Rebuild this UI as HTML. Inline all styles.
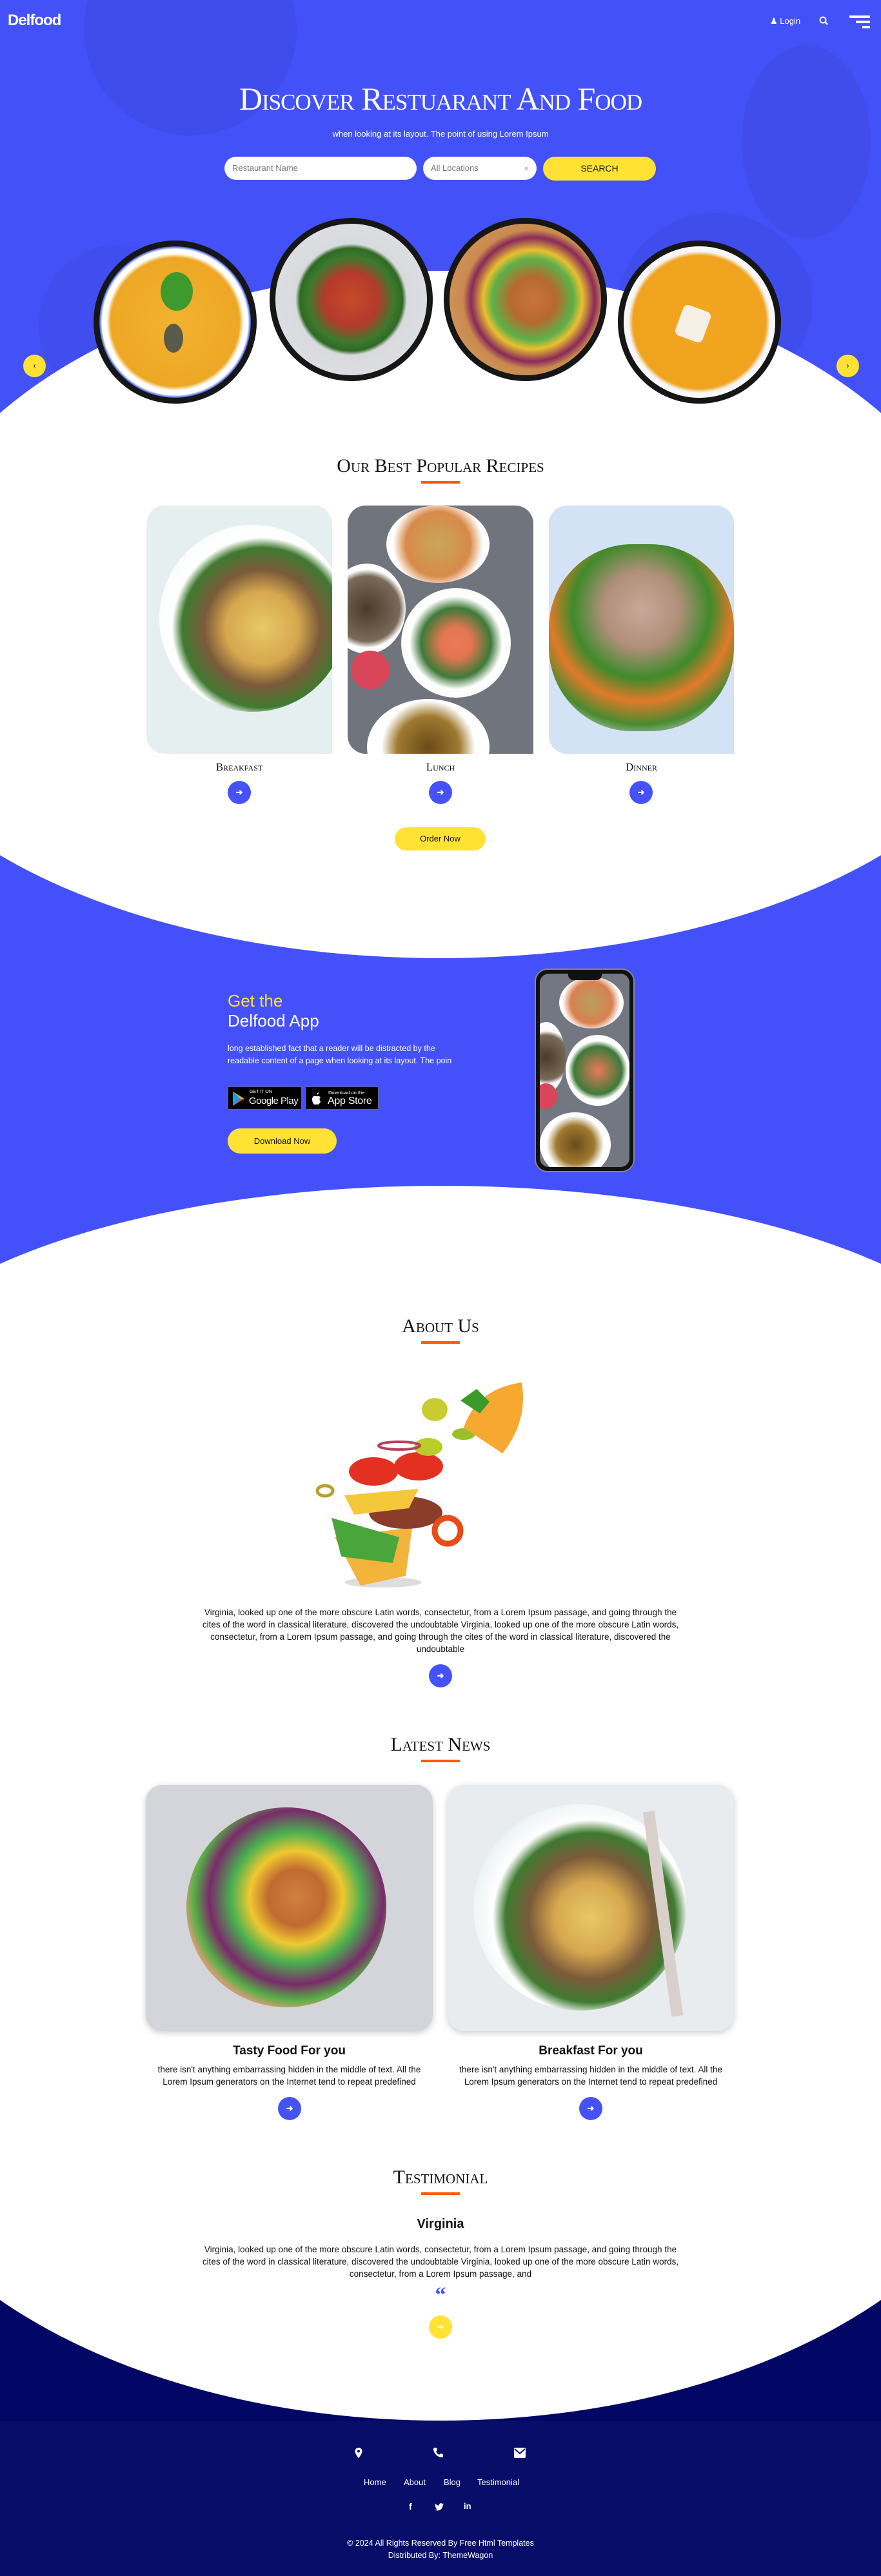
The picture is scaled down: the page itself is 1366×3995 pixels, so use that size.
<!DOCTYPE html>
<html><head><meta charset="utf-8">
<style>
*{margin:0;padding:0;box-sizing:border-box}
body{width:1366px;height:3995px;position:relative;overflow:hidden;background:#fff;font-family:"Liberation Sans",sans-serif;color:#111}
.a{position:absolute}
.h{font-family:"Liberation Serif",serif;font-variant:small-caps;color:#111;text-align:center;left:0;width:1366px}
.ul{position:absolute;left:653px;width:60px;height:4px;background:#ff5a00}
.c{text-align:center;left:0;width:1366px}
.btn{position:absolute;width:36px;height:36px;border-radius:50%;background:#4552f7;color:#fff;font-size:13px;line-height:36px;text-align:center;font-weight:bold}
.ybtn{position:absolute;background:#ffe234;border-radius:20px;text-align:center;color:#111;font-size:13px}
.circ{position:absolute;width:253px;height:253px;border-radius:50%;border:9px solid #161616;overflow:hidden}
.badge{position:absolute;background:#000;border:1px solid #666;height:36px;color:#fff}
p{font-size:13.5px;line-height:19px}
</style></head><body>

<svg class="a" style="left:0;top:1300px" width="1366" height="700">
 <rect x="0" y="0" width="1366" height="680" fill="#4451fa"/>
 <ellipse cx="683" cy="-272" rx="900" ry="458" fill="#fff"/>
 <ellipse cx="683" cy="886" rx="900" ry="347" fill="#fff"/>
</svg>
<svg class="a" style="left:0;top:3300px" width="1366" height="460">
 <rect x="0" y="262" width="1366" height="194" fill="#020766"/>
 <ellipse cx="683" cy="-90" rx="905" ry="544" fill="#fff"/>
</svg>

<div class="a" style="left:0;top:0;width:1366px;height:660px;background:#4351f8;overflow:hidden">
  <div class="a" style="left:130px;top:-120px;width:330px;height:330px;border-radius:50%;background:#3e4cec"></div>
  <div class="a" style="left:1150px;top:70px;width:200px;height:300px;border-radius:50%;background:#404deb"></div>
  <div class="a" style="left:960px;top:330px;width:300px;height:280px;border-radius:50%;background:#404ded"></div>
  <div class="a" style="left:60px;top:380px;width:240px;height:250px;border-radius:50%;background:#404eef"></div>
</div>
<svg class="a" style="left:0;top:0" width="1366" height="700"><ellipse cx="683" cy="965" rx="850" ry="545" fill="#fff"/></svg>

<div class="a" style="left:12px;top:18px;font-size:24px;font-weight:bold;color:#fff;letter-spacing:-1px">Delfood</div>
<div class="a" style="left:1194px;top:25px;font-size:13px;color:#fff">&#9823; Login</div>
<svg class="a" style="left:1270px;top:25px" width="14" height="14"><circle cx="6" cy="6" r="4.5" fill="none" stroke="#fff" stroke-width="2"/><path d="M9 9l4 4" stroke="#fff" stroke-width="2.5"/></svg>
<div class="a" style="left:1317px;top:24px;width:32px;height:4px;background:#fff"></div>
<div class="a" style="left:1327px;top:32px;width:22px;height:4px;background:#fff"></div>
<div class="a" style="left:1337px;top:40px;width:12px;height:4px;background:#fff"></div>

<div class="a h" style="top:124px;font-size:50px;color:#fff;letter-spacing:-1px">Discover Restuarant And Food</div>
<div class="a c" style="top:200px;font-size:13px;color:#fff">when looking at its layout. The point of using Lorem Ipsum</div>
<div class="a" style="left:348px;top:243px;width:298px;height:36px;background:#fff;border-radius:18px;font-size:13px;color:#777;padding:10px 12px">Restaurant Name</div>
<div class="a" style="left:656px;top:243px;width:176px;height:36px;background:#fff;border-radius:18px;font-size:13px;color:#777;padding:10px 12px">All Locations<span style="float:right;color:#ccc">&#9679;</span></div>
<div class="ybtn" style="left:842px;top:243px;width:175px;height:37px;line-height:37px;font-size:14px">SEARCH</div>

<div class="circ" style="left:145px;top:373px;background:radial-gradient(circle,#f1b230 0,#eea825 60%,#fff 64%,#fff 68%,#1d3ec8 71%,#1d3ec8 80%,#fff 82%)">
 <div class="a" style="left:95px;top:40px;width:50px;height:60px;border-radius:50%;background:#3f9a2e"></div>
 <div class="a" style="left:100px;top:120px;width:30px;height:45px;border-radius:50%;background:#5a5a4a"></div>
</div>
<div class="circ" style="left:418px;top:338px;background:radial-gradient(circle,#c84a2a 0,#b43a2c 25%,#3c7a2e 40%,#2f6a25 48%,#d9dadd 52%,#e2e3e6 100%)"></div>
<div class="circ" style="left:688px;top:338px;background:radial-gradient(circle at 55% 50%,#c6763a 0,#b8692f 20%,#5cb04a 36%,#e8c030 44%,#8a2a5a 55%,#c98a4e 62%,#d9a066 100%)"></div>
<div class="circ" style="left:958px;top:373px;background:radial-gradient(circle,#f2a620 0,#f0a31e 62%,#f5f5f5 66%,#fff 75%,#1d3ec8 78%,#fff 81%)">
 <div class="a" style="left:85px;top:95px;width:45px;height:50px;background:#f5f0e5;border-radius:8px;transform:rotate(20deg)"></div>
</div>
<div class="ybtn" style="left:36px;top:550px;width:35px;height:35px;line-height:35px;font-size:12px">&#8249;</div>
<div class="ybtn" style="left:1297px;top:550px;width:35px;height:35px;line-height:35px;font-size:12px">&#8250;</div>

<div class="a h" style="top:706px;font-size:30px">Our Best Popular Recipes</div>
<div class="ul" style="top:746px"></div>

<div class="a" style="left:227px;top:784px;width:288px;height:385px;border-radius:28px 28px 0 28px;overflow:hidden;background:#e6eff0">
 <div class="a" style="left:20px;top:30px;width:290px;height:290px;border-radius:50%;background:radial-gradient(circle at 55% 55%,#e8c96a 0,#d6a74e 25%,#7b5a3a 40%,#3f7a30 55%,#fff 62%,#f1f5f5 100%)"></div>
</div>
<div class="a" style="left:539px;top:784px;width:288px;height:385px;border-radius:28px 28px 0 28px;overflow:hidden;background:#70747d">
 <div class="a" style="left:60px;top:0;width:160px;height:120px;border-radius:50%;background:radial-gradient(circle,#c8a85a,#d88a4a 50%,#fff 70%)"></div>
 <div class="a" style="left:-30px;top:90px;width:120px;height:140px;border-radius:50%;background:radial-gradient(circle,#4a3a2a,#7a6a5a 55%,#fff 66%)"></div>
 <div class="a" style="left:83px;top:128px;width:170px;height:170px;border-radius:50%;background:radial-gradient(circle,#e97a5a 0,#e47650 20%,#3e7a3a 45%,#fff 60%,#f2f0ec 100%)"></div>
 <div class="a" style="left:30px;top:300px;width:190px;height:150px;border-radius:50%;background:radial-gradient(circle,#6a4a1a,#a07a30 40%,#fff 60%)"></div>
 <div class="a" style="left:5px;top:225px;width:60px;height:60px;border-radius:50%;background:#d9465a"></div>
</div>
<div class="a" style="left:851px;top:784px;width:287px;height:385px;border-radius:28px 28px 0 28px;overflow:hidden;background:#d3e2f4">
 <div class="a" style="left:0;top:60px;width:287px;height:290px;border-radius:45%;background:radial-gradient(circle at 50% 35%,#c9a89a 0,#b08f7a 25%,#3f8a2a 45%,#e07a2a 60%,#4a8a30 75%,#cfe0f0 90%)"></div>
</div>
<div class="a h" style="left:227px;width:288px;top:1180px;font-size:17px">Breakfast</div>
<div class="a h" style="left:539px;width:288px;top:1180px;font-size:17px">Lunch</div>
<div class="a h" style="left:851px;width:287px;top:1180px;font-size:17px">Dinner</div>
<div class="btn" style="left:353px;top:1211px">&#10140;</div>
<div class="btn" style="left:665px;top:1211px">&#10140;</div>
<div class="btn" style="left:976px;top:1211px">&#10140;</div>
<div class="ybtn" style="left:612px;top:1283px;width:141px;height:36px;line-height:36px">Order Now</div>

<div class="a" style="left:353px;top:1537px;font-size:26px;color:#ffe234">Get the</div>
<div class="a" style="left:353px;top:1568px;font-size:26px;color:#fff">Delfood App</div>
<p class="a" style="left:353px;top:1617px;color:#fff;font-size:12.5px">long established fact that a reader will be distracted by the<br>readable content of a page when looking at its layout. The poin</p>
<div class="badge" style="left:353px;top:1685px;width:115px">
 <svg class="a" style="left:5px;top:6px" width="22" height="24"><path d="M2 1L20 12L2 23Z" fill="#2fc36d"/><path d="M2 1L14 12L2 23Z" fill="#1e9bf0"/><path d="M14 12L20 12L2 23Z" fill="#f2344a"/><path d="M14 12L20 12L2 1Z" fill="#fbbf1c" opacity=".8"/></svg>
 <div class="a" style="left:33px;top:4px;font-size:7px">GET IT ON</div>
 <div class="a" style="left:32px;top:13px;font-size:15px;letter-spacing:-.5px">Google Play</div>
</div>
<div class="badge" style="left:473px;top:1685px;width:114px">
 <svg class="a" style="left:7px;top:7px" width="18" height="22"><path d="M9 7c-2-1-6 0-6 5s3 9 5 8c1 0 1-.5 2-.5s1 .5 2 .5c2 0 4-4 4-5-2-1-2-5 0-6-1-2-3-2-4-2s-2 .5-3 0z" fill="#fff"/><path d="M10 5c0-2 1-3 3-4 0 2-1 3-3 4z" fill="#fff"/></svg>
 <div class="a" style="left:35px;top:4px;font-size:7.5px">Download on the</div>
 <div class="a" style="left:34px;top:13px;font-size:16px;letter-spacing:-.3px">App Store</div>
</div>
<div class="ybtn" style="left:353px;top:1750px;width:169px;height:39px;line-height:39px">Download Now</div>
<div class="a" style="left:829px;top:1502px;width:155px;height:316px;border-radius:20px;background:#111;border:2px solid #888;padding:6px">
 <div style="width:100%;height:100%;border-radius:14px;overflow:hidden;background:#737781;position:relative">
  <div class="a" style="left:30px;top:5px;width:100px;height:80px;border-radius:50%;background:radial-gradient(circle,#b8a060,#d88050 50%,#fff 70%)"></div>
  <div class="a" style="left:-20px;top:75px;width:60px;height:110px;border-radius:50%;background:radial-gradient(circle,#4a3a2a,#7a6a5a 55%,#fff 66%)"></div>
  <div class="a" style="left:40px;top:95px;width:100px;height:110px;border-radius:50%;background:radial-gradient(circle,#e97a5a,#3e7a3a 50%,#fff 62%)"></div>
  <div class="a" style="left:0;top:215px;width:110px;height:100px;border-radius:50%;background:radial-gradient(circle,#6a4a1a,#a07a30 40%,#fff 60%)"></div>
  <div class="a" style="left:-8px;top:170px;width:35px;height:40px;border-radius:50%;background:#d9465a"></div>
 </div>
 <div class="a" style="left:50px;top:6px;width:52px;height:10px;background:#111;border-radius:0 0 8px 8px"></div>
</div>

<div class="a h" style="top:2040px;font-size:30px">About Us</div>
<div class="ul" style="top:2080px"></div>
<svg class="a" style="left:479px;top:2124px" width="380" height="345">
 <ellipse cx="115" cy="330" rx="60" ry="8" fill="#ddd"/>
 <path d="M40 260 L160 245 L150 320 L80 335 Z" fill="#f2b43a"/>
 <path d="M35 230 L140 260 L130 300 L50 290 Z" fill="#4aa63a"/>
 <ellipse cx="150" cy="222" rx="57" ry="25" fill="#8a3e2a"/>
 <path d="M55 195 L170 185 L155 215 L70 225 Z" fill="#f5c73a"/>
 <path d="M215 250 m-20 0 a20 20 0 1 0 40 0 a20 20 0 1 0-40 0" fill="none" stroke="#e84a1a" stroke-width="9"/>
 <ellipse cx="100" cy="158" rx="38" ry="22" fill="#e33020"/>
 <ellipse cx="170" cy="150" rx="38" ry="22" fill="#e33020"/>
 <ellipse cx="25" cy="188" rx="12" ry="8" fill="none" stroke="#b8a030" stroke-width="5"/>
 <ellipse cx="195" cy="62" rx="20" ry="18" fill="#c8cc30"/>
 <ellipse cx="185" cy="120" rx="22" ry="14" fill="#b9cc2a"/>
 <ellipse cx="240" cy="100" rx="18" ry="9" fill="#9abf2a"/>
 <ellipse cx="140" cy="118" rx="32" ry="6" fill="none" stroke="#b84060" stroke-width="4"/>
 <path d="M240 90 q20 -60 90 -70 q10 60 -30 110 Z" fill="#f7a830"/>
 <path d="M280 50 l-20 -20 l-25 18 l30 20Z" fill="#3a9a2a"/>
</svg>
<p class="a" style="left:313px;width:740px;top:2491px;text-align:center">Virginia, looked up one of the more obscure Latin words, consectetur, from a Lorem Ipsum passage, and going through the cites of the word in classical literature, discovered the undoubtable Virginia, looked up one of the more obscure Latin words, consectetur, from a Lorem Ipsum passage, and going through the cites of the word in classical literature, discovered the undoubtable</p>
<div class="btn" style="left:665px;top:2581px">&#10140;</div>

<div class="a h" style="top:2689px;font-size:30px">Latest News</div>
<div class="ul" style="top:2729px"></div>
<div class="a" style="left:226px;top:2768px;width:445px;height:382px;border-radius:26px;overflow:hidden;background:#d4d5da;box-shadow:0 3px 10px rgba(0,0,0,.2)">
 <div class="a" style="left:63px;top:35px;width:310px;height:310px;border-radius:50%;background:radial-gradient(circle at 55% 45%,#d08040 0,#c06a30 18%,#f0c830 30%,#4ab050 42%,#7a2a6a 56%,#55b045 66%,#c9a070 72%,#b88a5a 78%,#d4d5da 80%)"></div>
</div>
<div class="a" style="left:694px;top:2768px;width:444px;height:382px;border-radius:26px;overflow:hidden;background:#e8ecee;box-shadow:0 3px 10px rgba(0,0,0,.2)">
 <div class="a" style="left:40px;top:30px;width:330px;height:320px;border-radius:50%;background:radial-gradient(circle at 55% 55%,#e8c96a 0,#d6a74e 22%,#7b5a3a 38%,#3f7a30 52%,#fff 60%,#eef4f5 72%,#e8ecee 76%)"></div>
 <div class="a" style="left:325px;top:40px;width:18px;height:320px;background:#d9d0cc;transform:rotate(-8deg)"></div>
</div>
<div class="a" style="left:226px;width:445px;top:3170px;text-align:center;font-size:19px;font-weight:bold">Tasty Food For you</div>
<div class="a" style="left:694px;width:444px;top:3170px;text-align:center;font-size:19px;font-weight:bold">Breakfast For you</div>
<p class="a" style="left:226px;width:445px;top:3200px;text-align:center">there isn't anything embarrassing hidden in the middle of text. All the Lorem Ipsum generators on the Internet tend to repeat predefined</p>
<p class="a" style="left:694px;width:444px;top:3200px;text-align:center">there isn't anything embarrassing hidden in the middle of text. All the Lorem Ipsum generators on the Internet tend to repeat predefined</p>
<div class="btn" style="left:431px;top:3252px">&#10140;</div>
<div class="btn" style="left:898px;top:3252px">&#10140;</div>

<div class="a h" style="top:3360px;font-size:30px">Testimonial</div>
<div class="ul" style="top:3400px"></div>
<div class="a c" style="top:3438px;font-size:20px;font-weight:bold">Virginia</div>
<p class="a" style="left:313px;width:740px;top:3479px;text-align:center">Virginia, looked up one of the more obscure Latin words, consectetur, from a Lorem Ipsum passage, and going through the cites of the word in classical literature, discovered the undoubtable Virginia, looked up one of the more obscure Latin words, consectetur, from a Lorem Ipsum passage, and</p>
<div class="a c" style="top:3540px;font-size:34px;font-weight:bold;color:#4552f7;font-family:'Liberation Serif',serif;line-height:40px">&#8220;</div>
<div class="ybtn" style="left:665px;top:3591px;width:36px;height:36px;line-height:36px;color:#fff">&#10140;</div>

<div class="a" style="left:0;top:3755px;width:1366px;height:240px;background:#070d69"></div>
<svg class="a" style="left:549px;top:3795px" width="14" height="18"><path d="M7 1a5.5 5.5 0 0 0-5.5 5.5C1.5 11 7 17 7 17s5.5-6 5.5-10.5A5.5 5.5 0 0 0 7 1z" fill="#fff"/><circle cx="7" cy="6.5" r="2" fill="#070d69"/></svg>
<svg class="a" style="left:671px;top:3795px" width="16" height="17"><path d="M3 1l3 0 1 4-2 2c1 2 3 4 5 5l2-2 4 1v3c0 1-1 2-2 2C7 16 1 9 1 3c0-1 1-2 2-2z" fill="#fff"/></svg>
<svg class="a" style="left:797px;top:3796px" width="18" height="16"><rect x="0" y="0" width="18" height="16" rx="2" fill="#fff"/><path d="M1 2l8 7 8-7" stroke="#070d69" stroke-width="2" fill="none"/></svg>
<div class="a" style="left:564px;top:3842px;font-size:13px;color:#fff">Home</div>
<div class="a" style="left:626px;top:3842px;font-size:13px;color:#fff">About</div>
<div class="a" style="left:688px;top:3842px;font-size:13px;color:#fff">Blog</div>
<div class="a" style="left:740px;top:3842px;font-size:13px;color:#fff">Testimonial</div>
<div class="a" style="left:634px;top:3879px;font-size:14px;color:#fff;font-weight:bold">f</div>
<svg class="a" style="left:674px;top:3882px" width="14" height="12" viewBox="0 0 24 20"><path d="M24 2.4a10 10 0 0 1-2.8.8A5 5 0 0 0 23.3.4a10 10 0 0 1-3.1 1.2A4.9 4.9 0 0 0 11.8 6 14 14 0 0 1 1.7.9a4.9 4.9 0 0 0 1.5 6.6A4.900 4.9 0 0 1 1 6.9a4.9 4.9 0 0 0 3.9 4.8 5 5 0 0 1-2.2.1 4.9 4.9 0 0 0 4.6 3.4A9.900 9.9 0 0 1 0 17.3 14 14 0 0 0 7.5 19.5c9.1 0 14-7.5 14-14v-.6A10 10 0 0 0 24 2.4z" fill="#fff"/></svg>
<div class="a" style="left:719px;top:3879px;font-size:13px;color:#fff;font-weight:bold">in</div>
<div class="a c" style="top:3937px;font-size:12.5px;color:#fff">© 2024 All Rights Reserved By Free Html Templates</div>
<div class="a c" style="top:3956px;font-size:12.5px;color:#fff">Distributed By: ThemeWagon</div>
</body></html>
